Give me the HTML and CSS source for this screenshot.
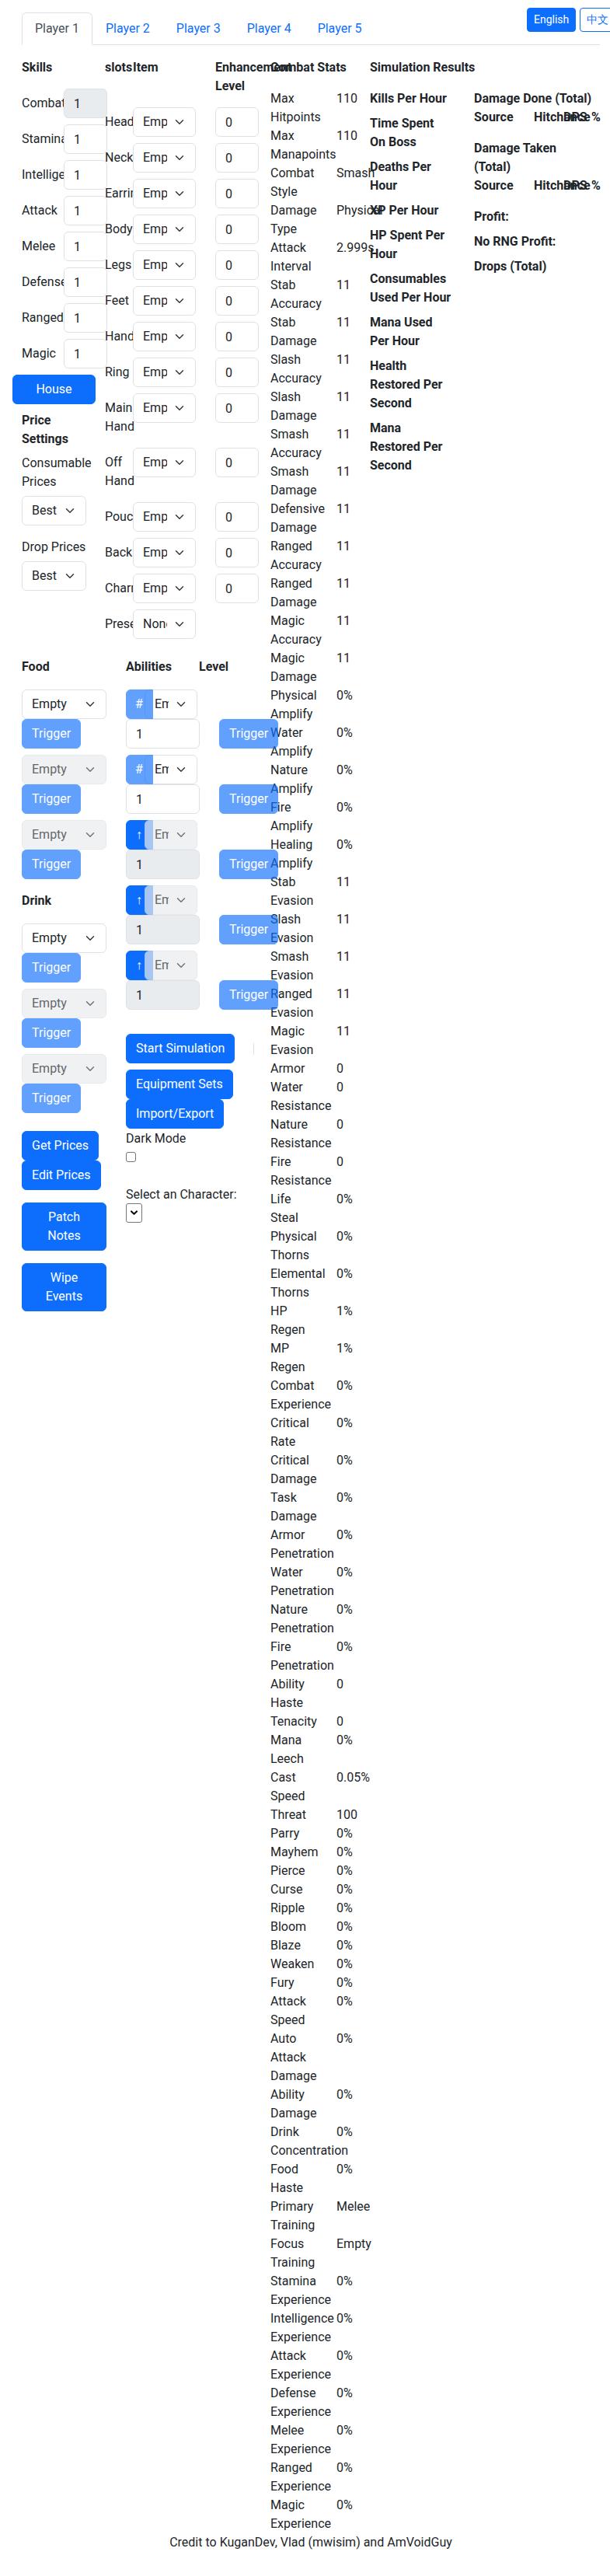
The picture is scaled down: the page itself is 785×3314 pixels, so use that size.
FILE: index.html
```html
<!DOCTYPE html>
<html lang="en">
<head>
<meta charset="utf-8">
<title>Combat Simulator</title>
<link rel="stylesheet" href="styles.css">
</head>
<body>
<div class="page">
  <div class="lang">
    <button class="btn btn-sm">English</button>
    <button class="btn btn-sm btn-outline">中文</button>
  </div>
  <ul class="tabs">
    <li class="tab active">Player 1</li>
    <li class="tab">Player 2</li>
    <li class="tab">Player 3</li>
    <li class="tab">Player 4</li>
    <li class="tab">Player 5</li>
  </ul>

  <div class="main">
    <div class="left">
      <div class="top-row">
        <div class="skills">
          <div class="head skills-head">Skills</div>
          <div class="skill-row"><span class="sk-name">Combat</span><input class="form-control" value="1" disabled></div>
          <div class="skill-row"><span class="sk-name">Stamina</span><input class="form-control" value="1"></div>
          <div class="skill-row"><span class="sk-name">Intelligence</span><input class="form-control" value="1"></div>
          <div class="skill-row"><span class="sk-name">Attack</span><input class="form-control" value="1"></div>
          <div class="skill-row"><span class="sk-name">Melee</span><input class="form-control" value="1"></div>
          <div class="skill-row"><span class="sk-name">Defense</span><input class="form-control" value="1"></div>
          <div class="skill-row"><span class="sk-name">Ranged</span><input class="form-control" value="1"></div>
          <div class="skill-row"><span class="sk-name">Magic</span><input class="form-control" value="1"></div>
          <button class="btn house">House</button>
          <div class="head price-head">Price Settings</div>
          <div class="price-label">Consumable Prices</div>
          <select class="form-select price-select"><option>Best</option></select>
          <div class="price-label drop-label">Drop Prices</div>
          <select class="form-select price-select"><option>Best</option></select>
        </div>

        <div class="equip">
          <div class="equip-head"><span>slots</span><span>Item</span><span>Enhancement Level</span></div>
          <div class="slot-row"><span class="slot-name">Head</span><select class="form-select slot-select"><option>Empty</option></select><input class="form-control enh" value="0"></div>
          <div class="slot-row"><span class="slot-name">Neck</span><select class="form-select slot-select"><option>Empty</option></select><input class="form-control enh" value="0"></div>
          <div class="slot-row"><span class="slot-name">Earrings</span><select class="form-select slot-select"><option>Empty</option></select><input class="form-control enh" value="0"></div>
          <div class="slot-row"><span class="slot-name">Body</span><select class="form-select slot-select"><option>Empty</option></select><input class="form-control enh" value="0"></div>
          <div class="slot-row"><span class="slot-name">Legs</span><select class="form-select slot-select"><option>Empty</option></select><input class="form-control enh" value="0"></div>
          <div class="slot-row"><span class="slot-name">Feet</span><select class="form-select slot-select"><option>Empty</option></select><input class="form-control enh" value="0"></div>
          <div class="slot-row"><span class="slot-name">Hands</span><select class="form-select slot-select"><option>Empty</option></select><input class="form-control enh" value="0"></div>
          <div class="slot-row"><span class="slot-name">Ring</span><select class="form-select slot-select"><option>Empty</option></select><input class="form-control enh" value="0"></div>
          <div class="slot-row"><span class="slot-name">Main Hand</span><select class="form-select slot-select"><option>Empty</option></select><input class="form-control enh" value="0"></div>
          <div class="slot-row"><span class="slot-name">Off Hand</span><select class="form-select slot-select"><option>Empty</option></select><input class="form-control enh" value="0"></div>
          <div class="slot-row"><span class="slot-name">Pouch</span><select class="form-select slot-select"><option>Empty</option></select><input class="form-control enh" value="0"></div>
          <div class="slot-row"><span class="slot-name">Back</span><select class="form-select slot-select"><option>Empty</option></select><input class="form-control enh" value="0"></div>
          <div class="slot-row"><span class="slot-name">Charm</span><select class="form-select slot-select"><option>Empty</option></select><input class="form-control enh" value="0"></div>
          <div class="slot-row"><span class="slot-name">Preset</span><select class="form-select slot-select"><option>None</option></select></div>
        </div>
      </div>

      <div class="bottom-row">
        <div class="food">
          <div class="head sec-head">Food</div>
          <div class="cons-block"><select class="form-select cons-select"><option>Empty</option></select><button class="btn trigger" disabled>Trigger</button></div>
          <div class="cons-block"><select class="form-select cons-select" disabled><option>Empty</option></select><button class="btn trigger" disabled>Trigger</button></div>
          <div class="cons-block"><select class="form-select cons-select" disabled><option>Empty</option></select><button class="btn trigger" disabled>Trigger</button></div>
          <div class="head sec-head drink-head">Drink</div>
          <div class="cons-block"><select class="form-select cons-select"><option>Empty</option></select><button class="btn trigger" disabled>Trigger</button></div>
          <div class="cons-block"><select class="form-select cons-select" disabled><option>Empty</option></select><button class="btn trigger" disabled>Trigger</button></div>
          <div class="cons-block"><select class="form-select cons-select" disabled><option>Empty</option></select><button class="btn trigger" disabled>Trigger</button></div>
          <button class="btn stack first-stack">Get Prices</button>
          <button class="btn stack">Edit Prices</button>
          <button class="btn wide">Patch Notes</button>
          <button class="btn wide">Wipe Events</button>
        </div>

        <div class="abil">
          <div class="head sec-head abil-head"><span>Abilities</span><span>Level</span></div>
          <div class="ab-row">
            <div class="ab-block">
              <div class="ab-top"><button class="btn ab-btn" disabled>#</button><select class="form-select ab-select"><option>Empty</option></select></div>
              <input class="form-control ab-level" value="1">
            </div>
            <button class="btn trigger" disabled>Trigger</button>
          </div>
          <div class="ab-row">
            <div class="ab-block">
              <div class="ab-top"><button class="btn ab-btn" disabled>#</button><select class="form-select ab-select"><option>Empty</option></select></div>
              <input class="form-control ab-level" value="1">
            </div>
            <button class="btn trigger" disabled>Trigger</button>
          </div>
          <div class="ab-row">
            <div class="ab-block">
              <div class="ab-top"><button class="btn ab-btn">↑</button><select class="form-select ab-select" disabled><option>Empty</option></select></div>
              <input class="form-control ab-level" value="1" disabled>
            </div>
            <button class="btn trigger" disabled>Trigger</button>
          </div>
          <div class="ab-row">
            <div class="ab-block">
              <div class="ab-top"><button class="btn ab-btn">↑</button><select class="form-select ab-select" disabled><option>Empty</option></select></div>
              <input class="form-control ab-level" value="1" disabled>
            </div>
            <button class="btn trigger" disabled>Trigger</button>
          </div>
          <div class="ab-row">
            <div class="ab-block">
              <div class="ab-top"><button class="btn ab-btn">↑</button><select class="form-select ab-select" disabled><option>Empty</option></select></div>
              <input class="form-control ab-level" value="1" disabled>
            </div>
            <button class="btn trigger" disabled>Trigger</button>
          </div>
          <div class="sim-row"><button class="btn">Start Simulation</button><span class="vr"></span></div>
          <button class="btn stack sets">Equipment Sets</button>
          <button class="btn stack">Import/Export</button>
          <div class="dark-label">Dark Mode</div>
          <input type="checkbox" class="dark-check">
          <div class="char-label">Select an Character:</div>
          <select class="char-select"></select>
        </div>
      </div>
    </div>

    <div class="stats">
      <div class="head stats-head">Combat Stats</div>
      <div class="stat"><span class="sn">Max Hitpoints</span><span class="sv">110</span></div>
      <div class="stat"><span class="sn">Max Manapoints</span><span class="sv">110</span></div>
      <div class="stat"><span class="sn">Combat Style</span><span class="sv">Smash</span></div>
      <div class="stat"><span class="sn">Damage Type</span><span class="sv">Physical</span></div>
      <div class="stat"><span class="sn">Attack Interval</span><span class="sv">2.999s</span></div>
      <div class="stat"><span class="sn">Stab Accuracy</span><span class="sv">11</span></div>
      <div class="stat"><span class="sn">Stab Damage</span><span class="sv">11</span></div>
      <div class="stat"><span class="sn">Slash Accuracy</span><span class="sv">11</span></div>
      <div class="stat"><span class="sn">Slash Damage</span><span class="sv">11</span></div>
      <div class="stat"><span class="sn">Smash Accuracy</span><span class="sv">11</span></div>
      <div class="stat"><span class="sn">Smash Damage</span><span class="sv">11</span></div>
      <div class="stat"><span class="sn">Defensive Damage</span><span class="sv">11</span></div>
      <div class="stat"><span class="sn">Ranged Accuracy</span><span class="sv">11</span></div>
      <div class="stat"><span class="sn">Ranged Damage</span><span class="sv">11</span></div>
      <div class="stat"><span class="sn">Magic Accuracy</span><span class="sv">11</span></div>
      <div class="stat"><span class="sn">Magic Damage</span><span class="sv">11</span></div>
      <div class="stat"><span class="sn">Physical Amplify</span><span class="sv">0%</span></div>
      <div class="stat"><span class="sn">Water Amplify</span><span class="sv">0%</span></div>
      <div class="stat"><span class="sn">Nature Amplify</span><span class="sv">0%</span></div>
      <div class="stat"><span class="sn">Fire Amplify</span><span class="sv">0%</span></div>
      <div class="stat"><span class="sn">Healing Amplify</span><span class="sv">0%</span></div>
      <div class="stat"><span class="sn">Stab Evasion</span><span class="sv">11</span></div>
      <div class="stat"><span class="sn">Slash Evasion</span><span class="sv">11</span></div>
      <div class="stat"><span class="sn">Smash Evasion</span><span class="sv">11</span></div>
      <div class="stat"><span class="sn">Ranged Evasion</span><span class="sv">11</span></div>
      <div class="stat"><span class="sn">Magic Evasion</span><span class="sv">11</span></div>
      <div class="stat"><span class="sn">Armor</span><span class="sv">0</span></div>
      <div class="stat"><span class="sn">Water Resistance</span><span class="sv">0</span></div>
      <div class="stat"><span class="sn">Nature Resistance</span><span class="sv">0</span></div>
      <div class="stat"><span class="sn">Fire Resistance</span><span class="sv">0</span></div>
      <div class="stat"><span class="sn">Life Steal</span><span class="sv">0%</span></div>
      <div class="stat"><span class="sn">Physical Thorns</span><span class="sv">0%</span></div>
      <div class="stat"><span class="sn">Elemental Thorns</span><span class="sv">0%</span></div>
      <div class="stat"><span class="sn">HP Regen</span><span class="sv">1%</span></div>
      <div class="stat"><span class="sn">MP Regen</span><span class="sv">1%</span></div>
      <div class="stat"><span class="sn">Combat Experience</span><span class="sv">0%</span></div>
      <div class="stat"><span class="sn">Critical Rate</span><span class="sv">0%</span></div>
      <div class="stat"><span class="sn">Critical Damage</span><span class="sv">0%</span></div>
      <div class="stat"><span class="sn">Task Damage</span><span class="sv">0%</span></div>
      <div class="stat"><span class="sn">Armor Penetration</span><span class="sv">0%</span></div>
      <div class="stat"><span class="sn">Water Penetration</span><span class="sv">0%</span></div>
      <div class="stat"><span class="sn">Nature Penetration</span><span class="sv">0%</span></div>
      <div class="stat"><span class="sn">Fire Penetration</span><span class="sv">0%</span></div>
      <div class="stat"><span class="sn">Ability Haste</span><span class="sv">0</span></div>
      <div class="stat"><span class="sn">Tenacity</span><span class="sv">0</span></div>
      <div class="stat"><span class="sn">Mana Leech</span><span class="sv">0%</span></div>
      <div class="stat"><span class="sn">Cast Speed</span><span class="sv">0.05%</span></div>
      <div class="stat"><span class="sn">Threat</span><span class="sv">100</span></div>
      <div class="stat"><span class="sn">Parry</span><span class="sv">0%</span></div>
      <div class="stat"><span class="sn">Mayhem</span><span class="sv">0%</span></div>
      <div class="stat"><span class="sn">Pierce</span><span class="sv">0%</span></div>
      <div class="stat"><span class="sn">Curse</span><span class="sv">0%</span></div>
      <div class="stat"><span class="sn">Ripple</span><span class="sv">0%</span></div>
      <div class="stat"><span class="sn">Bloom</span><span class="sv">0%</span></div>
      <div class="stat"><span class="sn">Blaze</span><span class="sv">0%</span></div>
      <div class="stat"><span class="sn">Weaken</span><span class="sv">0%</span></div>
      <div class="stat"><span class="sn">Fury</span><span class="sv">0%</span></div>
      <div class="stat"><span class="sn">Attack Speed</span><span class="sv">0%</span></div>
      <div class="stat"><span class="sn">Auto Attack Damage</span><span class="sv">0%</span></div>
      <div class="stat"><span class="sn">Ability Damage</span><span class="sv">0%</span></div>
      <div class="stat"><span class="sn">Drink Concentration</span><span class="sv">0%</span></div>
      <div class="stat"><span class="sn">Food Haste</span><span class="sv">0%</span></div>
      <div class="stat"><span class="sn">Primary Training</span><span class="sv">Melee</span></div>
      <div class="stat"><span class="sn">Focus Training</span><span class="sv">Empty</span></div>
      <div class="stat"><span class="sn">Stamina Experience</span><span class="sv">0%</span></div>
      <div class="stat"><span class="sn">Intelligence Experience</span><span class="sv">0%</span></div>
      <div class="stat"><span class="sn">Attack Experience</span><span class="sv">0%</span></div>
      <div class="stat"><span class="sn">Defense Experience</span><span class="sv">0%</span></div>
      <div class="stat"><span class="sn">Melee Experience</span><span class="sv">0%</span></div>
      <div class="stat"><span class="sn">Ranged Experience</span><span class="sv">0%</span></div>
      <div class="stat"><span class="sn">Magic Experience</span><span class="sv">0%</span></div>
    </div>

    <div class="results">
      <div class="head results-head">Simulation Results</div>
      <div class="res-cols">
        <div class="res-list">
          <div class="res-item">Kills Per Hour</div>
          <div class="res-item">Time Spent On Boss</div>
          <div class="res-item">Deaths Per Hour</div>
          <div class="res-item">XP Per Hour</div>
          <div class="res-item">HP Spent Per Hour</div>
          <div class="res-item">Consumables Used Per Hour</div>
          <div class="res-item">Mana Used Per Hour</div>
          <div class="res-item">Health Restored Per Second</div>
          <div class="res-item">Mana Restored Per Second</div>
        </div>
        <div class="dmg">
          <div class="dmg-title">Damage Done (Total)</div>
          <div class="dmg-row"><span class="c-src">Source</span><span class="c-hit">Hitchance</span><span class="c-dps">DPS</span><span>%</span></div>
          <div class="dmg-title">Damage Taken (Total)</div>
          <div class="dmg-row"><span class="c-src">Source</span><span class="c-hit">Hitchance</span><span class="c-dps">DPS</span><span>%</span></div>
          <div class="dmg-item">Profit:</div>
          <div class="dmg-item">No RNG Profit:</div>
          <div class="dmg-item">Drops (Total)</div>
        </div>
      </div>
    </div>
  </div>

  <footer class="credit">Credit to KuganDev, Vlad (mwisim) and AmVoidGuy</footer>
</div>
</body>
</html>
```

FILE: styles.css
```css
* { box-sizing: border-box; }
html { overflow-x: hidden; }
body {
  margin: 0;
  font-family: Roboto, "Liberation Sans", sans-serif;
  font-size: 16px;
  line-height: 24px;
  color: #212529;
  background: #fff;
}
.page {
  position: relative;
  width: 744px;
  margin-left: 28px;
  padding-top: 16px;
}

/* buttons */
.btn {
  font-family: inherit;
  font-size: 16px;
  line-height: 24px;
  display: inline-block;
  padding: 6px 12px;
  border: 1px solid #0d6efd;
  border-radius: 6px;
  background: #0d6efd;
  color: #fff;
  text-align: center;
  white-space: normal;
}
.btn:disabled { opacity: .65; }
.btn-sm {
  font-size: 14px;
  line-height: 21px;
  padding: 4px 8px;
  border-radius: 4px;
  white-space: nowrap;
}
.btn-outline { background: #fff; color: #0d6efd; }

.lang {
  position: absolute;
  top: 10px;
  left: 650px;
  width: max-content;
  display: flex;
  align-items: flex-start;
  gap: 5px;
}

/* tabs */
.tabs {
  display: flex;
  list-style: none;
  margin: 0;
  padding: 0;
  border-bottom: 1px solid #dee2e6;
}
.tab {
  padding: 8px 16px;
  border: 1px solid transparent;
  border-radius: 6px 6px 0 0;
  margin-bottom: -1px;
  color: #0d6efd;
}
.tab.active {
  color: #495057;
  background: #fff;
  border-color: #dee2e6 #dee2e6 #fff;
}

/* form controls */
.form-control {
  font-family: inherit;
  font-size: 16px;
  line-height: 24px;
  display: block;
  width: 100%;
  height: 38px;
  padding: 6px 12px;
  color: #212529;
  background: #fff;
  border: 1px solid #dee2e6;
  border-radius: 6px;
}
.form-control:disabled { background: #e9ecef; }
.form-select {
  font-family: inherit;
  font-size: 16px;
  line-height: 24px;
  display: block;
  height: 38px;
  padding: 6px 36px 6px 12px;
  color: #212529;
  background-color: #fff;
  background-image: url("data:image/svg+xml,%3csvg xmlns='http://www.w3.org/2000/svg' viewBox='0 0 16 16'%3e%3cpath fill='none' stroke='%23343a40' stroke-linecap='round' stroke-linejoin='round' stroke-width='2' d='m2 5 6 6 6-6'/%3e%3c/svg%3e");
  background-repeat: no-repeat;
  background-position: right 12px center;
  background-size: 16px 12px;
  border: 1px solid #dee2e6;
  border-radius: 6px;
  appearance: none;
  -webkit-appearance: none;
}
.form-select:disabled { background-color: #e9ecef; }

.head { font-weight: 700; }

/* layout */
.main {
  display: flex;
  padding-top: 17px;
}
.left { width: 320px; flex: none; }
.top-row { display: flex; }
.skills { width: 107px; flex: none; }
.equip { width: 213px; flex: none; }

.skills-head { margin-bottom: 15px; }
.skill-row {
  display: grid;
  grid-template-columns: 54px 56px;
  align-items: center;
  height: 38px;
  margin-bottom: 8px;
  white-space: nowrap;
}
.house {
  display: block;
  width: 107px;
  margin-left: -12px;
}
.price-head { width: 95px; margin-top: 9px; }
.price-label { width: 95px; margin-top: 7px; }
.drop-label { margin-top: 16px; }
.price-select { width: 83px; margin-top: 6px; }

.equip-head {
  display: grid;
  grid-template-columns: 36px 106px 56px;
  height: 48px;
  margin-bottom: 15px;
  font-weight: 700;
}
.slot-row {
  display: grid;
  grid-template-columns: 36px 106px 56px;
  align-items: start;
  margin-bottom: 8px;
}
.slot-name { padding: 7px 0; }
.slot-select { width: 81px; }

.bottom-row {
  display: flex;
  margin-top: 16px;
}
.food { width: 134px; flex: none; }
.sec-head { margin-bottom: 17px; }
.drink-head { margin-top: 16px; }
.cons-block { margin-bottom: 8px; }
.cons-select { width: 109px; }
.trigger { display: block; }
.stack { display: block; }
.first-stack { margin-top: 23px; }
.wide {
  display: block;
  width: 109px;
  padding: 6px 16px;
  margin-top: 16px;
}

.abil { width: 186px; flex: none; }
.abil-head {
  display: grid;
  grid-template-columns: 94px auto;
}
.ab-row {
  display: grid;
  grid-template-columns: 95px 76px;
  column-gap: 25px;
  align-items: end;
  margin-bottom: 8px;
}
.ab-top { display: flex; height: 38px; }
.ab-btn {
  width: 35px;
  flex: none;
  padding: 6px 0;
  border-radius: 6px 0 0 6px;
  text-align: center;
  text-indent: -1px;
}
.ab-select {
  width: 68px;
  flex: none;
  margin-left: -11px;
}
.sim-row {
  display: flex;
  align-items: center;
  margin-top: 31px;
}
.vr {
  width: 1px;
  height: 15px;
  margin-left: 24px;
  background: #dee2e6;
}
.sets { margin-top: 8px; }
.dark-label { margin-top: 1px; }
.dark-check {
  display: block;
  appearance: none;
  -webkit-appearance: none;
  width: 13px;
  height: 13px;
  margin: 5px 0 0;
  border: 1px solid #767676;
  border-radius: 3px;
  background: #fff;
}
.char-label { margin-top: 30px; }
.char-select {
  display: block;
  width: 21px;
  height: 25px;
  margin-top: -1px;
  border: 1px solid #767676;
  border-radius: 3px;
  appearance: none;
  -webkit-appearance: none;
  background: #fff url("data:image/svg+xml,%3csvg xmlns='http://www.w3.org/2000/svg' viewBox='0 0 16 16'%3e%3cpath fill='none' stroke='%23000' stroke-linecap='round' stroke-linejoin='round' stroke-width='3' d='m3 5 5 5 5-5'/%3e%3c/svg%3e") no-repeat center / 11px 11px;
}

/* stats */
.stats { width: 128px; flex: none; }
.stats-head { margin-bottom: 16px; white-space: nowrap; }
.stat { display: flex; }
.sn { width: 50px; margin-right: 35px; flex: none; }
.sv { white-space: nowrap; }

/* results */
.results { width: 296px; flex: none; }
.results-head { margin-bottom: 16px; }
.res-cols { display: flex; }
.res-list { width: 105px; flex: none; }
.res-item { font-weight: 700; margin-bottom: 8px; }
.dmg { width: 152px; flex: none; margin-left: 29px; font-weight: 700; }
.dmg-row { display: flex; white-space: nowrap; margin-bottom: 16px; }
.c-src { width: 77px; flex: none; }
.c-hit { width: 38px; flex: none; }
.c-dps { width: 36px; flex: none; }
.dmg-item { margin-bottom: 8px; }

.credit {
  text-align: center;
  padding-bottom: 31px;
}
```
